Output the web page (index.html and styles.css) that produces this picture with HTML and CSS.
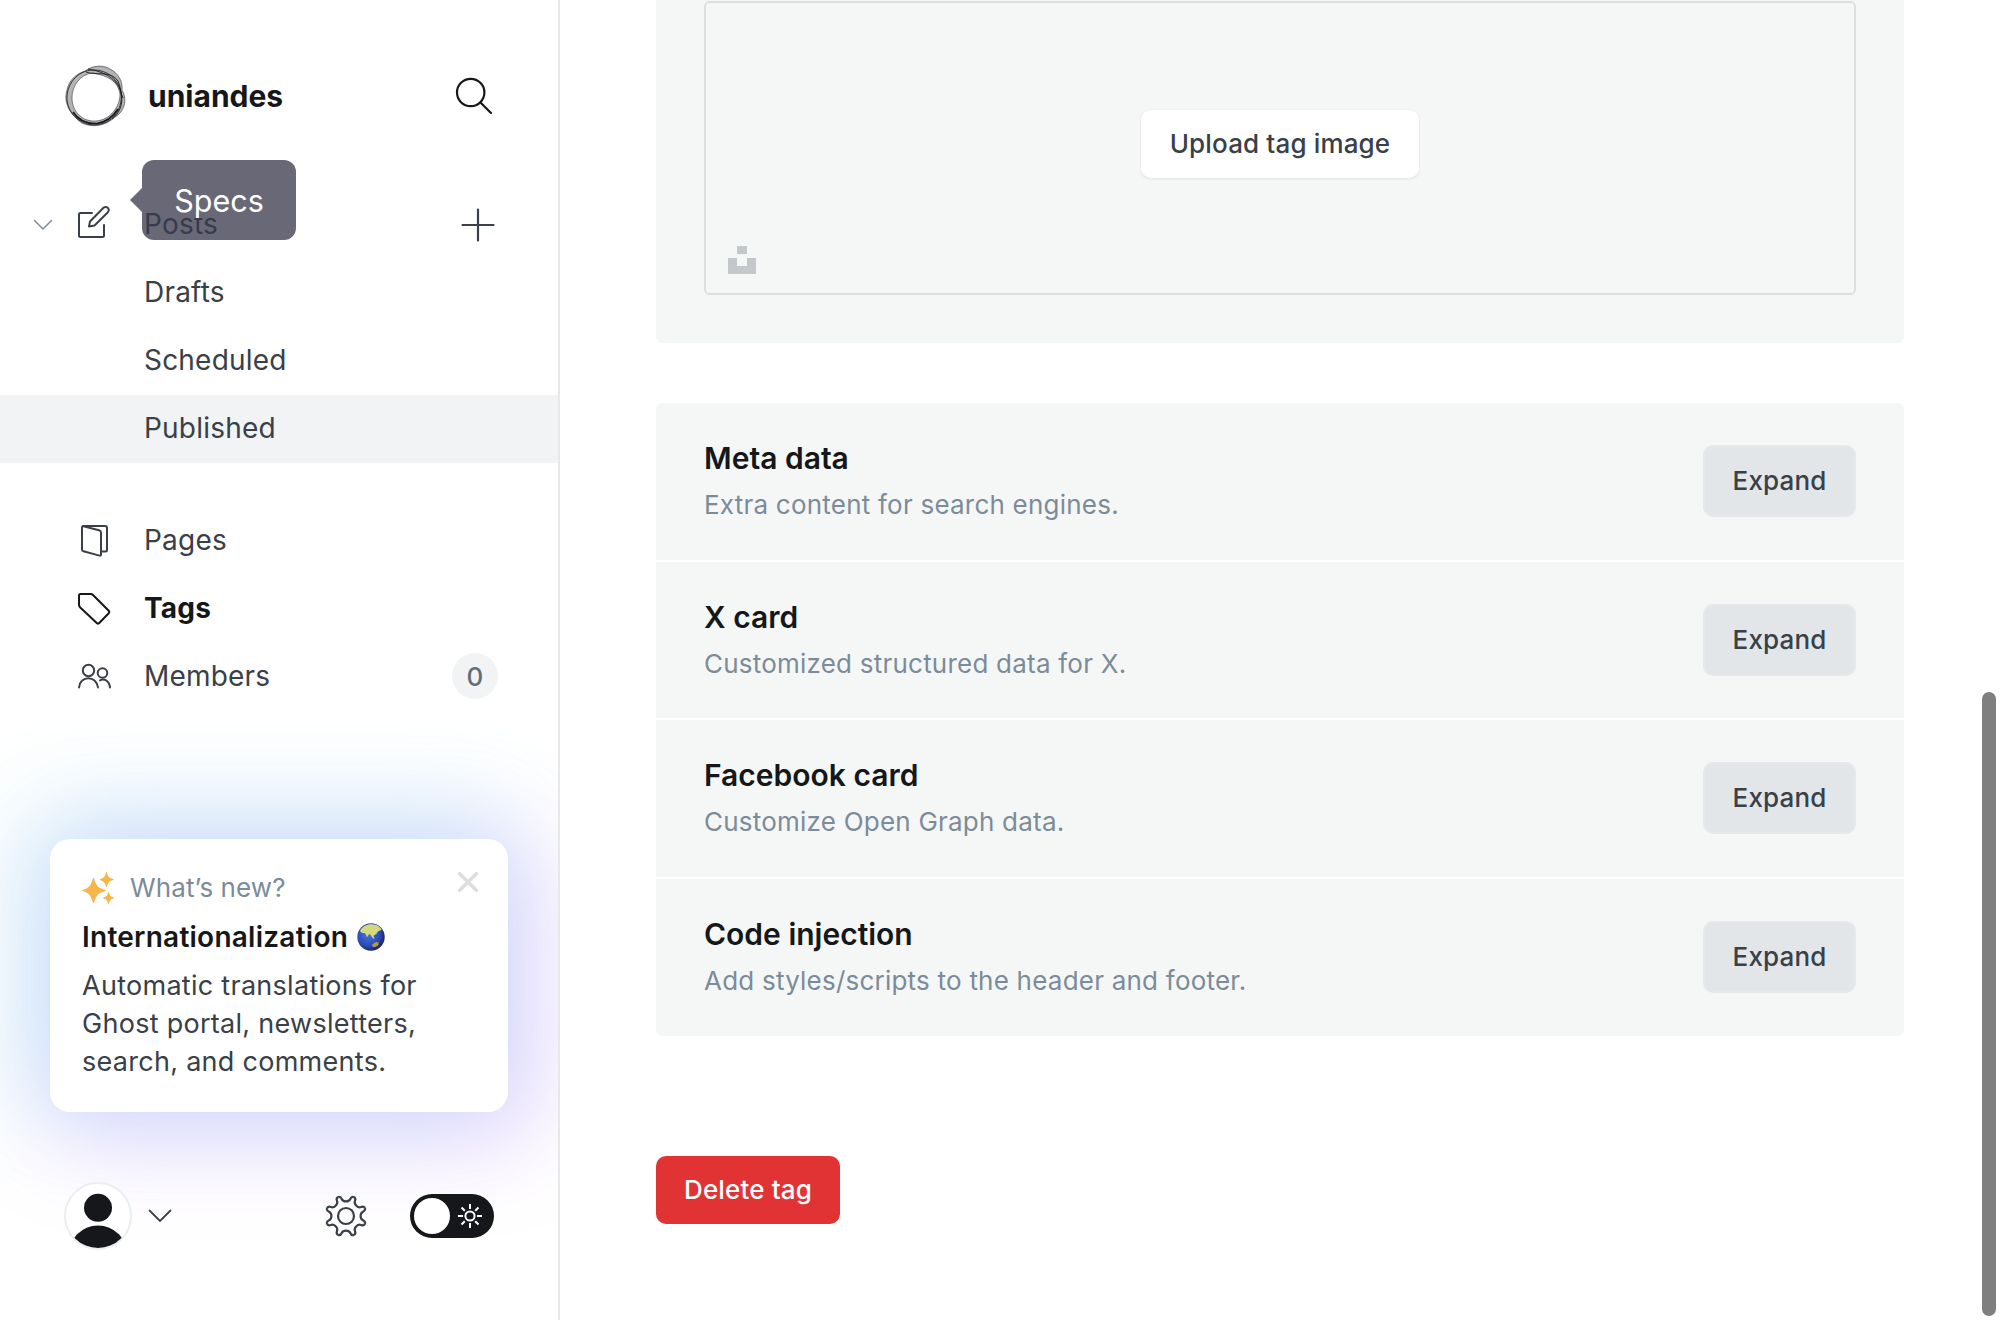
FILE: index.html
```html
<!DOCTYPE html>
<html lang="en">
<head>
<meta charset="utf-8">
<title>Tags</title>
<link rel="stylesheet" href="styles.css">
</head>
<body>
<div class="app">
  <aside class="sidebar">
    <header class="site">
      <svg class="site-logo" width="64" height="64" viewBox="0 0 64 64" fill="none" stroke="#15171a">
        <path d="M21 7C28 2 38 0 46 5C54 9 59 17 58 26C64 36 60 48 51 53C42 62 28 64 18 59C6 51 -1 38 3 26C5 16 12 10 21 7Z M29 9C16 10 8 22 8 34C8 48 19 58 32 57C46 56 56 43 56 30C54 17 44 12 29 9Z" fill="#15171a" fill-opacity=".32" fill-rule="evenodd" stroke-width=".5"/>
        <path d="M30 6C12 6 2 22 3 36C5 52 18 61 31 61C48 60 59 46 57 29C55 15 43 6 30 6Z" stroke-width=".8"/>
        <path d="M22 8C34 12 46 6 54 17C57 23 56 29 59 34M24 5C36 7 52 12 57 28C60 40 55 50 48 55" stroke-width=".9"/>
        <path d="M9 48C15 57 24 60 33 59.500C42 58 49 53 54 45" stroke-width="1.700"/>
      </svg>
      <span class="site-name">uniandes</span>
      <svg class="search" width="40" height="40" viewBox="0 0 40 40" fill="none" stroke="#15171a" stroke-width="2.200" stroke-linecap="round"><circle cx="16.700" cy="16.500" r="13.700"/><path d="M26.500 26.500L37 37"/></svg>
    </header>
    <nav class="nav">
      <a class="row posts">
        <svg class="caret" width="20" height="12" viewBox="0 0 20 12" fill="none" stroke="#7c8b9a" stroke-width="1.500" stroke-linecap="round"><path d="M1.500 1.500L10 10L18.500 1.500"/></svg>
        <svg class="icon pencil" width="34" height="34" viewBox="0 0 34 34" fill="none" stroke="#394047" stroke-width="2" stroke-linecap="round" stroke-linejoin="round"><path d="M15 8H3.500Q2 8 2 9.500V30.500Q2 32 3.500 32H25.500Q27 32 27 30.500V20"/><path d="M13 16.500L26.500 2.800Q28.700 1 31 3Q32.600 5 30.700 7.500L17.500 20.500L12 21.500Z"/></svg>
        <span class="label">Posts</span>
        <svg class="plus" width="34" height="34" viewBox="0 0 34 34" stroke="#394047" stroke-width="2.200" stroke-linecap="round"><path d="M1.500 17H32.500M17 1.500V32.500"/></svg>
        <span class="tooltip">Specs</span>
      </a>
      <a class="row sub"><span class="label">Drafts</span></a>
      <a class="row sub"><span class="label">Scheduled</span></a>
      <a class="row sub selected"><span class="label">Published</span></a>
    </nav>
    <nav class="nav second">
      <a class="row">
        <svg class="icon" width="34" height="34" viewBox="0 0 34 34" fill="none" stroke="#394047" stroke-width="2" stroke-linecap="round" stroke-linejoin="round"><path d="M6 3H28Q30 3 30 5V27Q30 28.500 28.500 28.500H24"/><path d="M5 4.500Q5 3 6.500 3.300L22 7.300Q24 8 24 9.500V31.500Q24 33 22.500 32.600L6.500 28.300Q5 28 5 26.500Z"/></svg>
        <span>Pages</span>
      </a>
      <a class="row current">
        <svg class="icon" width="34" height="34" viewBox="0 0 34 34" fill="none" stroke="#15171a" stroke-width="2" stroke-linecap="round" stroke-linejoin="round"><path d="M3.500 3H14Q15 3 16 4L31.500 19.500Q33 21 31.500 22.500L22 32.200Q21 33 20 32.200L3 16.200Q2 15.200 2 14V4.500Q2 3 3.500 3Z"/></svg>
        <span>Tags</span>
      </a>
      <a class="row">
        <svg class="icon" width="34" height="34" viewBox="0 0 34 34" fill="none" stroke="#394047" stroke-width="2" stroke-linecap="round"><circle cx="11.500" cy="11.500" r="5.700"/><circle cx="25.500" cy="14" r="4.800"/><path d="M2 28.500C3 16 19.500 16 21 28.500M23 21.300C28 19 32.500 22.500 33 28.500"/></svg>
        <span>Members</span><span class="badge">0</span>
      </a>
    </nav>
    <section class="news">
      <div class="news-head">
        <svg class="sparkles" width="32" height="34" viewBox="0 0 32 34" fill="#f5b547" stroke="#f5b547" stroke-linejoin="round"><path d="M11.500 7C13.500 15 16 17.500 23.500 19.500C16 21.500 13.500 24 11.500 32C9.500 24 7 21.500 .5 19.500C7 17.500 9.500 15 11.500 7Z"/><path d="M24.500 1.500C25.500 6 27 7.500 31.300 8.500C27 9.700 25.500 11.500 24.500 15.500C23.500 11.500 22 9.700 18 8.500C22 7.500 23.500 6 24.500 1.500Z"/><path d="M26.500 21.500C27.200 25 28.500 26.200 31.500 27C28.500 27.800 27.200 29.300 26.500 32.500C25.800 29.300 24.500 27.800 21.500 27C24.500 26.200 25.800 25 26.500 21.500Z"/></svg>
        <span>What’s new?</span>
        <svg class="close" width="22" height="22" viewBox="0 0 22 22" stroke="#dcdcdc" stroke-width="3.200" stroke-linecap="round"><path d="M2.500 2.500L19.500 19.500M19.500 2.500L2.500 19.500"/></svg>
      </div>
      <h2><span>Internationalization</span>
        <svg class="globe" width="28" height="28" viewBox="0 0 28 28"><defs><radialGradient id="sea" cx=".4" cy=".4" r=".62"><stop offset="0" stop-color="#4a74e0"/><stop offset=".7" stop-color="#2a49b4"/><stop offset="1" stop-color="#1a2663"/></radialGradient></defs><circle cx="14" cy="14" r="13.700" fill="url(#sea)"/><path d="M3 8C5 3.500 10 1 15 1.300C20 1.500 23.500 4 24.500 7C22.500 8 21 7.500 20 10C19.500 12 17.500 11 16.500 13L17.500 16C15 15.500 14.500 12 12.500 11C11 11.500 11 14 10 14C9 13 9.500 11 7.500 10C5 10.500 4 9.500 3 8Z" fill="#d3d97c"/><path d="M15 22C16 20 19.500 18 21.500 19.500C22.500 21.500 20 24.500 16 24Z" fill="#b8963f"/></svg>
      </h2>
      <p>Automatic translations for Ghost portal, newsletters, search, and comments.</p>
    </section>
    <footer class="user">
      <svg width="68" height="68" viewBox="0 0 68 68"><defs><clipPath id="disc"><circle cx="34" cy="34" r="32"/></clipPath></defs><circle cx="34" cy="34" r="33" fill="#fff" stroke="#ebeef0" stroke-width="2"/><circle cx="34" cy="25.800" r="14" fill="#15171a"/><circle cx="34" cy="73" r="29.500" fill="#15171a" clip-path="url(#disc)"/></svg>
      <svg class="user-caret" width="24" height="14" viewBox="0 0 24 14" fill="none" stroke="#394047" stroke-width="1.800" stroke-linecap="round"><path d="M1.500 1.500L12 12L22.500 1.500"/></svg>
      <svg class="gear" width="42" height="42" viewBox="-21 -21 42 42" fill="none" stroke="#394047" stroke-width="2.200"><circle r="8"/>
        <defs><path id="tooth" d="M-7.850 -18.950C-5.600 -19.600 -4.900 -18.500 -4.300 -17C-3.600 -15.300 -2 -14.600 0 -14.600C2 -14.600 3.600 -15.300 4.300 -17C4.900 -18.500 5.600 -19.600 7.850 -18.950"/></defs>
        <use href="#tooth"/><use href="#tooth" transform="rotate(45)"/><use href="#tooth" transform="rotate(90)"/><use href="#tooth" transform="rotate(135)"/><use href="#tooth" transform="rotate(180)"/><use href="#tooth" transform="rotate(225)"/><use href="#tooth" transform="rotate(270)"/><use href="#tooth" transform="rotate(315)"/>
      </svg>
      <svg class="toggle" width="84" height="44" viewBox="0 0 84 44"><rect width="84" height="44" rx="22" fill="#15171a"/><circle cx="22" cy="22" r="18" fill="#fff"/><g fill="none" stroke="#fff" stroke-width="2"><circle cx="60" cy="22" r="4.600"/><path d="M60 10v5M60 29v5M48 22h5M67 22h5M51.500 13.500l3.300 3.300M65.200 27.200l3.300 3.300M51.500 30.500l3.300-3.300M65.200 16.800l3.300-3.300"/></g></svg>
    </footer>
  </aside>
  <main class="main">
    <section class="card image-card">
      <div class="dropzone">
        <button class="btn white">Upload tag image</button>
        <svg class="unsplash" width="28" height="28" viewBox="0 0 28 28" fill="#c5c8cb"><path d="M9 0h10v8H9zM0 12h9v8h10v-8h9v16H0z"/></svg>
      </div>
    </section>
    <section class="settings">
      <div class="setting"><div><h3>Meta data</h3><p>Extra content for search engines.</p></div><button class="btn gray">Expand</button></div>
      <div class="setting"><div><h3>X card</h3><p>Customized structured data for X.</p></div><button class="btn gray">Expand</button></div>
      <div class="setting"><div><h3>Facebook card</h3><p>Customize Open Graph data.</p></div><button class="btn gray">Expand</button></div>
      <div class="setting"><div><h3>Code injection</h3><p>Add styles/scripts to the header and footer.</p></div><button class="btn gray">Expand</button></div>
    </section>
    <button class="btn red">Delete tag</button>
  </main>
  <div class="scrollbar"></div>
</div>
</body>
</html>
```
FILE: styles.css
```css
* { box-sizing: border-box; margin: 0; padding: 0; }
body { width: 2000px; height: 1320px; overflow: hidden; background: #fff; color: #15171a; font-family: Inter, sans-serif; }
.app { display: flex; height: 1320px; position: relative; }

/* Sidebar */
.sidebar { width: 560px; border-right: 2px solid #e6e8ea; display: flex; flex-direction: column; overflow: hidden; flex: none; }
.site { display: flex; align-items: center; height: 64px; margin: 64px 64px 0; }
.site-name { margin-left: 20px; font-size: 30px; font-weight: 700; }
.search { margin-left: auto; }
.nav { margin-top: 63px; }
.nav.second { margin-top: 43px; }
.row { position: relative; display: flex; align-items: center; height: 68px; padding: 0 60px 0 77px; font-size: 28px; letter-spacing: .2px; color: #394047; }
.label { padding-bottom: 2px; }
.icon { margin-right: 33px; }
.pencil { margin-top: -6px; }
.posts { padding-left: 33px; }
.caret { margin-right: 24px; }
.plus { margin-left: auto; margin-right: 3px; }
.sub { padding-left: 144px; }
.selected { background: #f1f3f4; }
.current { color: #15171a; font-weight: 700; }
.badge { margin-left: auto; width: 46px; height: 46px; border-radius: 50%; background: #f1f3f4; display: grid; place-items: center; font-size: 26px; font-weight: 500; color: #626d79; }
.tooltip { position: absolute; left: 142px; top: -31px; width: 154px; height: 80px; border-radius: 12px; background: rgba(57,58,77,.763); display: grid; place-items: center; color: #fff; font-size: 30.5px; letter-spacing: 0; }
.tooltip::before { content: ""; position: absolute; right: 100%; top: 28px; border: 12px solid transparent; border-left-width: 0; border-right-color: rgba(57,58,77,.763); }

/* What's new */
.news { position: relative; margin: 129px 50px 0; width: 458px; height: 273px; border-radius: 20px; background: #fff; padding: 32px; box-shadow: -14px -12px 96px 16px rgba(75,220,226,.24), 14px 12px 96px 16px rgba(202,103,255,.28); }
.news-head { display: flex; font-size: 26px; line-height: 34px; letter-spacing: .1px; color: #7c8b9a; gap: 16px; }
.close { margin-left: auto; margin-right: -3px; }
.news h2 { display: flex; align-items: center; gap: 9px; font-size: 28px; font-weight: 600; letter-spacing: .25px; line-height: 38px; margin-top: 13px; }
.news p { font-size: 27px; line-height: 38px; letter-spacing: .28px; color: #394047; margin-top: 11px; }

.user { position: relative; display: flex; align-items: center; margin: 70px 64px 0; }
.user-caret { margin-left: 16px; }
.gear { margin-left: 153px; }
.toggle { margin-left: auto; }

/* Main column */
.main { width: 1248px; margin-left: 96px; }
.card { background: #f4f7f6; }
.image-card { height: 343px; padding: 1px 48px 48px; border-radius: 0 0 6px 6px; }
.dropzone { position: relative; height: 294px; border: 2px solid #dcdfdf; border-radius: 6px; display: flex; justify-content: center; padding-top: 107px; }
.btn { border: 0; font-family: inherit; font-size: 26px; font-weight: 500; letter-spacing: .15px; color: #394047; border-radius: 10px; padding-bottom: 2px; }
.white { width: 278px; height: 68px; background: #fff; box-shadow: 0 1px 3px rgba(0,0,0,.1); }
.unsplash { position: absolute; left: 22px; bottom: 19px; }
.settings { display: grid; grid-template-rows: 157px 156px 157px 157px; gap: 2px; margin-top: 60px; border-radius: 6px; overflow: hidden; }
.setting { display: flex; justify-content: space-between; align-items: flex-start; padding: 33px 48px 0; background: #f4f7f6; }
.setting h3 { font-size: 30px; font-weight: 600; line-height: 44px; }
.setting p { font-size: 26px; line-height: 44px; letter-spacing: .22px; color: #7c8b9a; margin-top: 3px; }
.gray { width: 153px; height: 72px; margin-top: 9px; background: #e3e6e9; border: 2px solid #e6e8ea; }
.red { width: 184px; height: 68px; margin-top: 120px; background: #e13333; color: #fff; }
.scrollbar { position: absolute; right: 4px; top: 692px; width: 14px; height: 624px; border-radius: 7px; background: #7f7f7f; }
```
